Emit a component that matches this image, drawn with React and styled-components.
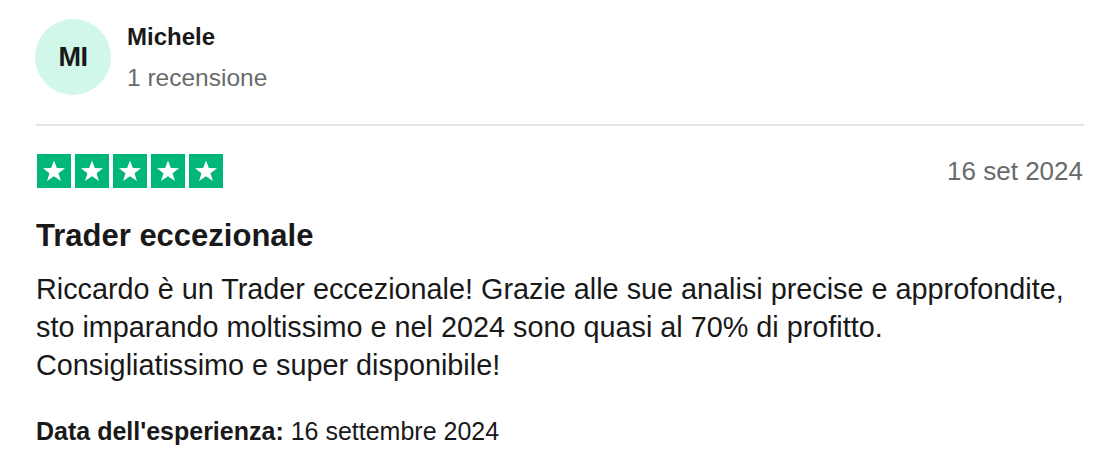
import React from "react";
import styled, { createGlobalStyle } from "styled-components";

const Global = createGlobalStyle`
  html, body { margin: 0; padding: 0; background: #fff; }
  body { font-family: "Liberation Sans", Arial, Helvetica, sans-serif; color: #191919; }
`;

const Card = styled.article`
  padding: 19px 29px 0 36px;
  display: flex;
  flex-direction: column;
`;

const Header = styled.div`
  display: flex;
  align-items: flex-start;
  gap: 16px;
  padding-bottom: 29px;
  border-bottom: 2px solid #e5e5dd;
`;

const Avatar = styled.div`
  width: 76px;
  height: 76px;
  border-radius: 50%;
  background: #d1f7e8;
  display: flex;
  align-items: center;
  justify-content: center;
  font-weight: 700;
  font-size: 27px;
  letter-spacing: -0.5px;
  color: #191919;
  margin-left: -1px;
`;

const Who = styled.div`
  display: flex;
  flex-direction: column;
  gap: 11px;
  margin-top: 3px;
`;

const Name = styled.span`
  font-weight: 700;
  font-size: 24px;
  line-height: 30px;
`;

const Count = styled.span`
  font-size: 24.5px;
  line-height: 30px;
  color: #696a6a;
`;

const TopRow = styled.div`
  display: flex;
  align-items: center;
  justify-content: space-between;
  margin-top: 28px;
`;

const Stars = styled.div`
  display: flex;
  gap: 4px;
  margin-left: 1px;
`;

const StarBox = styled.span`
  width: 34px;
  height: 34px;
  background: #00b67a;
  display: flex;
  align-items: center;
  justify-content: center;
`;

const DateText = styled.time`
  font-size: 26px;
  color: #696a6a;
  margin-right: 1px;
`;

const Title = styled.h2`
  margin: 29px 0 0;
  font-size: 31px;
  line-height: 38px;
  font-weight: 700;
`;

const Body = styled.p`
  margin: 15px 0 0;
  font-size: 28.8px;
  line-height: 38px;
`;

const Experience = styled.p`
  margin: 32px 0 0;
  font-size: 25px;
  line-height: 30px;
`;

const Star = () => (
  <svg width="26" height="26" viewBox="0 0 24 24" aria-hidden="true">
    <path
      fill="#fff"
      d="M12 2.2l2.6 7.1 7.6.1-6 4.6 2.2 7.3L12 16.9l-6.4 4.4 2.2-7.3-6-4.6 7.6-.1z"
    />
  </svg>
);

export default function App() {
  return (
    <>
      <Global />
      <Card>
        <Header>
          <Avatar>MI</Avatar>
          <Who>
            <Name>Michele</Name>
            <Count>1 recensione</Count>
          </Who>
        </Header>
        <TopRow>
          <Stars>
            {[0, 1, 2, 3, 4].map((i) => (
              <StarBox key={i}>
                <Star />
              </StarBox>
            ))}
          </Stars>
          <DateText>16 set 2024</DateText>
        </TopRow>
        <Title>Trader eccezionale</Title>
        <Body>
          Riccardo è un Trader eccezionale! Grazie alle sue analisi precise e
          approfondite, sto imparando moltissimo e nel 2024 sono quasi al 70% di
          profitto. Consigliatissimo e super disponibile!
        </Body>
        <Experience>
          <b>Data dell'esperienza:</b> 16 settembre 2024
        </Experience>
      </Card>
    </>
  );
}
